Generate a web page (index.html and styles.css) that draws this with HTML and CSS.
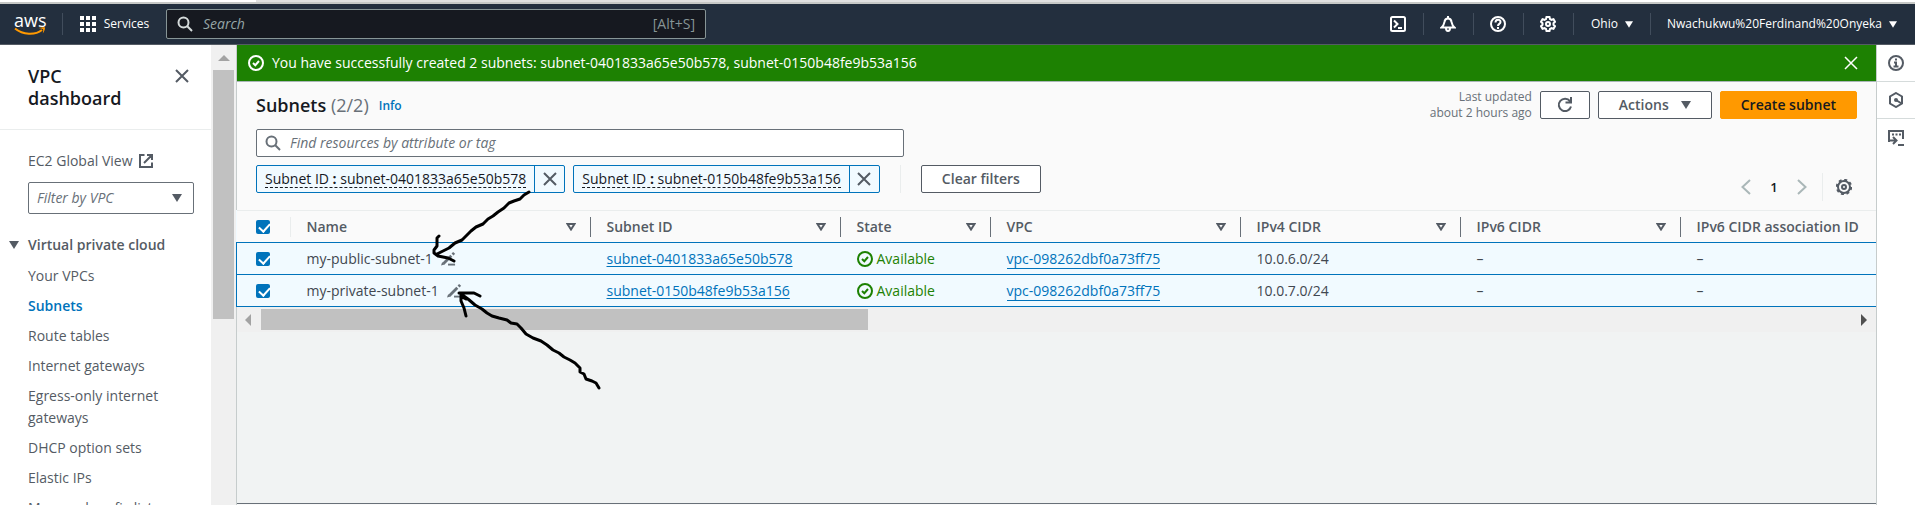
FILE: index.html
```html
<!DOCTYPE html>
<html lang="en">
<head>
<meta charset="utf-8">
<title>Subnets | VPC Console</title>
<link rel="stylesheet" href="styles.css">
</head>
<body>
<svg class="defs" aria-hidden="true">
  <symbol id="search" viewBox="0 0 16 16"><circle cx="6.5" cy="6.5" r="5"/><path d="M10.3 10.3 15 15"/></symbol>
  <symbol id="close" viewBox="0 0 16 16"><path d="M2 2 14 14M14 2 2 14"/></symbol>
  <symbol id="check" viewBox="0 0 16 16"><circle cx="8" cy="8" r="7"/><path d="M5 8 7.3 10.2 11 6"/></symbol>
  <symbol id="caret" viewBox="0 0 10 8"><path class="solid" d="M0 0H10L5 8Z"/></symbol>
  <symbol id="sort" viewBox="0 0 10 8"><path d="M1.5 1H8.5L5 6.5Z"/></symbol>
  <symbol id="gear" viewBox="0 0 16 16"><path d="M6.500 1H9.500L10 3 11.500 3.800 13.500 3.200 15 5.800 13.500 7.200V8.800L15 10.200 13.500 12.800 11.500 12.200 10 13 9.500 15H6.500L6 13 4.500 12.200 2.500 12.800 1 10.200 2.500 8.800V7.200L1 5.800 2.500 3.200 4.500 3.800 6 3Z"/><circle cx="8" cy="8" r="2"/></symbol>
  <symbol id="cog" viewBox="0 0 16 16"><circle cx="8" cy="8" r="6"/><circle class="teeth" cx="8" cy="8" r="7.2"/><circle cx="8" cy="8" r="2"/></symbol>
  <symbol id="edit" viewBox="0 0 16 16"><path d="M2.500 13.500 11 5" stroke-width="3"/><path d="M12.300 3.700 14 2" stroke-width="3"/><path class="solid" d="M0 15.500 1.200 12 3.800 14.400Z"/><path d="M7.500 14.500H15"/></symbol>
</svg>

<div class="browser-edge"><span></span></div>

<header class="topnav">
  <a class="logo" href="#" aria-label="AWS home">
    <span class="logo-text">aws</span>
    <svg class="smile" viewBox="0 0 32 8"><path d="M1 1.5C9 8 21 8.500 28 3"/><path class="solid" d="M24.500 1C28 0 31 0 31 .6 31.200 2.500 30 5 28.800 6.500 29 4.500 29.600 3 29 2.300 28 1.600 26.500 1.500 24.500 1Z"/></svg>
  </a>
  <button class="services" type="button">
    <svg viewBox="0 0 16 16"><path class="solid" d="M0 0h4v4H0zM6 0h4v4H6zM12 0h4v4h-4zM0 6h4v4H0zM6 6h4v4H6zM12 6h4v4h-4zM0 12h4v4H0zM6 12h4v4H6zM12 12h4v4h-4z"/></svg>
    Services
  </button>
  <label class="global-search">
    <svg class="icon"><use href="#search"/></svg>
    <input type="text" placeholder="Search" aria-label="Search">
    <span>[Alt+S]</span>
  </label>
  <nav class="utilities">
    <button type="button" aria-label="CloudShell"><svg class="icon" viewBox="0 0 16 16"><rect x="1" y="1" width="14" height="14" rx="1.500"/><path d="M4 4.500 7.500 8 4 11.500M8 12h4"/></svg></button>
    <button type="button" aria-label="Notifications"><svg class="icon" viewBox="0 0 16 16"><path d="M1.500 11.500C4 9.500 4 8 4.400 6 4.800 3.400 6 2.500 8 2.500s3.200.9 3.600 3.500c.4 2 .4 3.500 2.900 5.500Z"/><path d="M8 0v3M6 12c0 4 4 4 4 0"/></svg></button>
    <button type="button" aria-label="Help"><svg class="icon" viewBox="0 0 16 16"><circle cx="8" cy="8" r="7"/><path d="M5.500 6.500C5.500 3 10.500 3 10.500 6 10.500 8 8 7.800 8 10M8 11v2"/></svg></button>
    <button type="button" aria-label="Settings"><svg class="icon"><use href="#gear"/></svg></button>
    <button class="region" type="button">Ohio <svg class="caret small"><use href="#caret"/></svg></button>
    <button class="account" type="button">Nwachukwu%20Ferdinand%20Onyeka <svg class="caret small"><use href="#caret"/></svg></button>
  </nav>
</header>

<div class="layout">
  <div class="sidebar">
    <nav class="side">
      <div class="side-title">
        <h2>VPC dashboard</h2>
        <button type="button" aria-label="Close navigation"><svg class="icon"><use href="#close"/></svg></button>
      </div>
      <div class="side-body">
        <a class="external" href="#">EC2 Global View <svg class="icon" viewBox="0 0 16 16"><path d="M6.500 2H2V14H14V9.500M9 2H14V7M14 2 6 10"/></svg></a>
        <div class="select">
          <select aria-label="Filter by VPC"><option>Filter by VPC</option></select>
          <svg class="caret"><use href="#caret"/></svg>
        </div>
        <button class="group" type="button"><svg class="caret"><use href="#caret"/></svg>Virtual private cloud</button>
        <ul>
          <li><a href="#">Your VPCs</a></li>
          <li><a class="current" href="#">Subnets</a></li>
          <li><a href="#">Route tables</a></li>
          <li><a href="#">Internet gateways</a></li>
          <li><a href="#">Egress-only internet gateways</a></li>
          <li><a href="#">DHCP option sets</a></li>
          <li><a href="#">Elastic IPs</a></li>
          <li><a href="#">Managed prefix lists</a></li>
        </ul>
      </div>
    </nav>
    <div class="vbar"><svg viewBox="0 0 12 6"><path class="solid" d="M0 6 6 0 12 6Z"/></svg><span></span></div>
  </div>

  <main>
    <div class="flash" role="status">
      <svg class="icon"><use href="#check"/></svg>
      <p>You have successfully created 2 subnets: subnet-0401833a65e50b578, subnet-0150b48fe9b53a156</p>
      <button type="button" aria-label="Dismiss"><svg class="icon"><use href="#close"/></svg></button>
    </div>

    <section class="panel">
      <div class="heading">
        <h1>Subnets <span>(2/2)</span></h1>
        <a class="info" href="#">Info</a>
        <div class="actions">
          <p>Last updated<br>about 2 hours ago</p>
          <button class="btn refresh" type="button" aria-label="Refresh"><svg class="icon" viewBox="0 0 16 16"><path d="M14 9.500A6.200 6.200 0 1 1 13 4.200M14 0V5.500H8.500"/></svg></button>
          <button class="btn menu" type="button">Actions <svg class="caret"><use href="#caret"/></svg></button>
          <button class="btn primary" type="button">Create subnet</button>
        </div>
      </div>
      <label class="find">
        <svg class="icon"><use href="#search"/></svg>
        <input type="text" placeholder="Find resources by attribute or tag" aria-label="Find resources by attribute or tag">
      </label>
      <div class="filters">
        <div class="token"><span><u>Subnet ID <b>:</b> subnet-0401833a65e50b578</u></span><button type="button" aria-label="Remove filter"><svg class="icon"><use href="#close"/></svg></button></div>
        <div class="token"><span><u>Subnet ID <b>:</b> subnet-0150b48fe9b53a156</u></span><button type="button" aria-label="Remove filter"><svg class="icon"><use href="#close"/></svg></button></div>
        <div class="clear"><button class="btn" type="button">Clear filters</button></div>
        <div class="pages">
          <button type="button" aria-label="Previous page"><svg class="icon" viewBox="0 0 16 16"><path d="M12 1 4.500 8 12 15"/></svg></button>
          <button class="page" type="button">1</button>
          <button type="button" aria-label="Next page"><svg class="icon" viewBox="0 0 16 16"><path d="M4 1 11.500 8 4 15"/></svg></button>
          <button class="prefs" type="button" aria-label="Preferences"><svg class="icon"><use href="#cog"/></svg></button>
        </div>
      </div>
    </section>

    <div class="table-wrap">
      <table>
        <colgroup><col class="w-check"><col class="w-name"><col class="w-id"><col class="w-state"><col class="w-id"><col class="w-cidr"><col class="w-cidr"><col class="w-cidr"></colgroup>
        <thead>
          <tr>
            <th class="pick"><div><input type="checkbox" checked aria-label="Select all"></div></th>
            <th><div>Name <svg class="caret"><use href="#sort"/></svg></div></th>
            <th><div>Subnet ID <svg class="caret"><use href="#sort"/></svg></div></th>
            <th><div>State <svg class="caret"><use href="#sort"/></svg></div></th>
            <th><div>VPC <svg class="caret"><use href="#sort"/></svg></div></th>
            <th><div>IPv4 CIDR <svg class="caret"><use href="#sort"/></svg></div></th>
            <th><div>IPv6 CIDR <svg class="caret"><use href="#sort"/></svg></div></th>
            <th><div>IPv6 CIDR association ID <svg class="caret"><use href="#sort"/></svg></div></th>
          </tr>
        </thead>
        <tbody>
          <tr>
            <td class="pick"><input type="checkbox" checked aria-label="Select my-public-subnet-1"></td>
            <td><span class="cell">my-public-subnet-1 <svg class="icon edit"><use href="#edit"/></svg></span></td>
            <td><a href="#">subnet-0401833a65e50b578</a></td>
            <td><span class="cell ok"><svg class="icon"><use href="#check"/></svg>Available</span></td>
            <td><a class="ext" href="#">vpc-098262dbf0a73ff75</a></td>
            <td>10.0.6.0/24</td><td>–</td><td>–</td>
          </tr>
          <tr>
            <td class="pick"><input type="checkbox" checked aria-label="Select my-private-subnet-1"></td>
            <td><span class="cell">my-private-subnet-1 <svg class="icon edit"><use href="#edit"/></svg></span></td>
            <td><a href="#">subnet-0150b48fe9b53a156</a></td>
            <td><span class="cell ok"><svg class="icon"><use href="#check"/></svg>Available</span></td>
            <td><a class="ext" href="#">vpc-098262dbf0a73ff75</a></td>
            <td>10.0.7.0/24</td><td>–</td><td>–</td>
          </tr>
        </tbody>
      </table>
    </div>
    <div class="hbar"><svg class="left" viewBox="0 0 6 12"><path class="solid" d="M6 0 0 6 6 12Z"/></svg><span></span><svg class="right" viewBox="0 0 6 12"><path class="solid" d="M0 0 6 6 0 12Z"/></svg></div>
    <div class="split-edge"></div>

    <svg class="ink" viewBox="420 185 190 210" aria-hidden="true">
      <path d="M529 192 524 195 520 199 514 201 509 203 504 208 498 212 493 216 488 219 483 224 476 227 471 231 466 236 462 240 455 243 449 248 443 251 437 254M439 236 437 238 437 246 434 250 434 253 438 256 443 257 448 258 454 261"/>
      <path d="M599 388 596 383 592 381 586 379 584 374 580 372 580 368 575 363 570 360 564 357 559 353 553 350 547 345 541 341 533 338 526 334 521 328 517 324 511 323 507 320 499 318 492 316 487 313 482 309 475 305 468 299 461 294M459 293H474L480 296M461 293 461 301 464 308 466 316M462 297 466 299"/>
    </svg>
  </main>

  <aside class="rail">
    <button type="button" aria-label="Info"><svg class="icon" viewBox="0 0 16 16"><circle cx="8" cy="8" r="7"/><path d="M8 3.500v2M6 7.500H8V11M5.500 11.500H10.500"/></svg></button>
    <button type="button" aria-label="Diagnostics"><svg class="icon" viewBox="0 0 16 16"><path d="M8 1 14 4.500V11.500L8 15 2 11.500V4.500Z"/><path d="M8 8 13.500 11.500" /><circle class="solid" cx="8" cy="8" r="2"/></svg></button>
    <button type="button" aria-label="CloudShell panel"><svg class="icon" viewBox="0 0 16 16"><path d="M1 12V1H15V9M4 4.500H6M7.500 4.500H9.500M11 4.500H13M2 10.500H8M5 7 8.500 10.500 5 14M10 15H16"/></svg></button>
  </aside>
</div>
</body>
</html>
```
FILE: styles.css
```css
* { box-sizing: border-box; }
body {
  margin: 0;
  height: 100vh;
  display: flex;
  flex-direction: column;
  overflow: hidden;
  background: #fff;
  color: #16191f;
  font: 14px/22px "Open Sans", "Noto Sans", sans-serif;
}
h1, h2, p, ul { margin: 0; padding: 0; }
ul { list-style: none; }
a { color: inherit; text-decoration: none; }
button, input, select { font: inherit; color: inherit; }
button { padding: 0; border: 0; background: none; display: flex; align-items: center; justify-content: center; }
svg { fill: none; stroke: currentColor; stroke-width: 2; flex: none; display: block; }
.solid { fill: currentColor; stroke: none; }
.teeth { stroke-width: 2; stroke-dasharray: 3 2.650; }
.defs { position: absolute; width: 0; height: 0; }
.icon { width: 16px; height: 16px; }
.caret { width: 10px; height: 8px; }
.caret.small { width: 8px; height: 7px; }

.browser-edge { flex: none; height: 4px; padding: 0 525px 0 256px; border-bottom: 2px solid #c6c8c6; }
.browser-edge span { display: block; height: 2px; background: #e0e0e0; }

/* Top navigation */
.topnav {
  flex: none;
  display: flex;
  align-items: center;
  height: 41px;
  background: #232f3e;
  border-bottom: 1px solid #545b64;
  color: #fff;
}
.logo {
  display: flex;
  flex-direction: column;
  width: 63px;
  padding-left: 14px;
  height: 22px;
  border-right: 1px solid #414d5c;
}
.logo-text { font: 500 18px/14px "Open Sans", sans-serif; color: #fff; }
.smile { width: 32px; height: 8px; color: #f90; }
.services { width: 69px; gap: 8px; margin: 0 17px; font-size: 12px; font-weight: 500; }
.services svg { width: 16px; height: 16px; }
.global-search {
  display: flex;
  align-items: center;
  gap: 10px;
  width: 540px;
  height: 30px;
  padding: 0 10px;
  border: 1px solid #879596;
  border-radius: 2px;
  background: #161920;
  color: #d5dbdb;
}
.global-search input { flex: 1; min-width: 0; border: 0; padding: 0; background: none; outline: 0; }
.global-search input::placeholder { color: #95a5a6; font-style: italic; }
.global-search span { color: #879596; }
.utilities { display: flex; margin-left: auto; font-size: 12px; font-weight: 500; }
.utilities button { width: 50px; height: 22px; border-right: 1px solid #414d5c; gap: 7px; white-space: nowrap; }
.utilities .region { width: 77px; }
.utilities .account { width: auto; padding: 0 18px 0 16px; border: 0; }

.layout { flex: 1; min-height: 0; display: flex; }

/* Side navigation */
.sidebar { flex: none; width: 236px; display: flex; overflow: hidden; color: #545b64; }
.side { flex: 1; }
.side-title {
  display: flex;
  align-items: flex-start;
  justify-content: space-between;
  padding: 20px 21px 20px 28px;
  border-bottom: 1px solid #eaeded;
}
.side-title h2 { width: 110px; font-size: 18px; line-height: 22px; font-weight: 600; color: #16191f; }
.side-title button { height: 22px; }
.side-body { padding: 20px 17px 0 28px; }
.external { display: flex; align-items: center; gap: 6px; }
.select { display: grid; align-items: center; margin: 10px 0 20px; }
.select > * { grid-area: 1 / 1; }
.select select {
  appearance: none;
  height: 32px;
  padding: 0 8px;
  border: 1px solid #687078;
  border-radius: 2px;
  background: #fff;
  font-style: italic;
  color: #687078;
}
.select svg { justify-self: end; margin-right: 12px; pointer-events: none; }
.group { gap: 9px; margin-left: -19px; font-weight: 600; }
.side ul { display: grid; gap: 8px; margin-top: 9px; }
.side li a { display: block; }
.side .current { color: #0073bb; font-weight: 600; }
.vbar { width: 25px; padding: 10px 2px 0; background: #f0f0f0; color: #a3a3a3; }
.vbar svg { width: 12px; height: 6px; margin: 0 auto 9px; }
.vbar span { display: block; height: 249px; background: #c1c1c1; }

/* Main */
main {
  position: relative;
  flex: 1;
  min-width: 0;
  display: flex;
  flex-direction: column;
  border-left: 1px solid #c6cccc;
  background: #f1f3f3;
}
.flash {
  display: flex;
  align-items: center;
  gap: 8px;
  height: 37px;
  padding: 0 17px 0 11px;
  background: #1d8102;
  border-bottom: 1px solid #aab7b8;
  color: #fff;
}
.flash button { margin-left: auto; }
.flash button svg { stroke-width: 1.5; }
.panel { padding: 9px 19px 17px; background: #fafafa; }
.heading { display: flex; align-items: center; }
.heading h1 { font-size: 18px; line-height: 28px; font-weight: 600; }
.heading h1 span { font-weight: 400; color: #687078; }
.info { margin: 2px 0 0 10px; font-size: 12px; font-weight: 600; color: #0073bb; }
.actions { display: flex; align-items: center; gap: 8px; margin-left: auto; height: 28px; }
.actions p { font-size: 12px; line-height: 16px; text-align: right; color: #687078; }
.btn {
  height: 28px;
  padding: 0 20px;
  border: 1px solid #545b64;
  border-radius: 2px;
  background: #fff;
  color: #545b64;
  font-weight: 600;
  white-space: nowrap;
}
.refresh { width: 50px; padding: 0; }
.menu { gap: 12px; }
.primary { background: #f90; border-color: #f90; color: #16191f; }
.find {
  display: flex;
  align-items: center;
  gap: 9px;
  width: 648px;
  height: 28px;
  margin: 10px 0 8px;
  padding: 0 8px;
  border: 1px solid #687078;
  border-radius: 2px;
  background: #fff;
  color: #687078;
}
.find input { flex: 1; border: 0; padding: 0; outline: 0; background: none; }
.find input::placeholder { color: #687078; font-style: italic; }
.filters { display: flex; gap: 8px; }
.token { display: flex; height: 28px; border: 1px solid #0073bb; border-radius: 2px; background: #f1faff; }
.token span { padding: 3px 8px; line-height: 20px; }
.token u { display: block; height: 19px; text-decoration: none; border-bottom: 1px dashed #16191f; white-space: nowrap; }
.token button { width: 30px; border-left: 1px solid #0073bb; color: #545b64; }
.clear { margin-left: 12px; padding-left: 20px; border-left: 1px solid #eaeded; }
.pages { display: flex; align-items: center; height: 28px; margin: 8px 0 -8px auto; padding-right: 5px; color: #aab7b8; }
.pages .page { width: 40px; font-size: 13px; font-weight: 600; color: #16191f; }
.pages .prefs { height: 28px; margin-left: 12px; padding-left: 13px; border-left: 1px solid #eaeded; color: #545b64; }

/* Table */
.table-wrap { overflow: hidden; margin-left: -1px; }
table { width: 100%; min-width: 1664px; table-layout: fixed; border-collapse: collapse; background: #f1faff; }
.w-check { width: 54px; }
.w-name { width: 300px; }
.w-id { width: 250px; }
.w-state { width: 150px; }
.w-cidr { width: 220px; }
thead tr { background: #fafafa; border-top: 1px solid #eaeded; }
th { height: 32px; padding: 0; text-align: left; font-weight: 600; color: #545b64; }
th div { display: flex; align-items: center; justify-content: space-between; height: 20px; padding: 0 14px 0 16px; border-right: 1px solid #687078; white-space: nowrap; }
th.pick div { border-color: #eaeded; padding-left: 19px; }
tbody tr { border-top: 1px solid #0073bb; border-bottom: 1px solid #0073bb; }
td { height: 32px; padding: 0 16px; line-height: 20px; white-space: nowrap; color: #414750; }
td.pick { padding: 0 0 0 19px; border-left: 1px solid #0073bb; }
td a { color: #0073bb; text-decoration: underline; text-underline-offset: 2px; }
td a.ext { text-decoration: none; border-bottom: 1px solid #0073bb; }
.cell { display: flex; align-items: center; gap: 8px; }
.ok { gap: 4px; color: #1d8102; }
.edit { width: 15px; height: 15px; color: #687078; }
input[type="checkbox"] {
  appearance: none;
  display: block;
  width: 14px;
  height: 14px;
  margin: 0;
  border-radius: 2px;
  background: #0073bb;
}
input[type="checkbox"]::after {
  content: "";
  display: block;
  width: 5px;
  height: 9px;
  margin: 1px 0 0 5px;
  border: solid #fff;
  border-width: 0 2px 2px 0;
  transform: rotate(42deg);
}
.hbar { display: flex; align-items: center; height: 25px; padding: 0 9px 0 8px; background: #f0f0f0; }
.hbar svg { width: 6px; height: 12px; }
.hbar .left { color: #a3a3a3; }
.hbar .right { color: #505050; margin-left: auto; }
.hbar span { width: 607px; height: 21px; margin-left: 10px; background: #c1c1c1; }
.split-edge { height: 2px; margin-top: auto; border-top: 1px solid #687078; background: #fafafa; }
.ink { position: absolute; left: 183px; top: 140px; width: 190px; height: 210px; color: #000; stroke-width: 3; stroke-linecap: round; stroke-linejoin: round; pointer-events: none; }

/* Tools rail */
.rail { flex: none; width: 39px; border-left: 1px solid #c6cccc; color: #545b64; }
.rail button { width: 100%; height: 37px; padding-left: 0; border-bottom: 1px solid #d5dbdb; }
.rail button:last-child { border: 0; }
```
